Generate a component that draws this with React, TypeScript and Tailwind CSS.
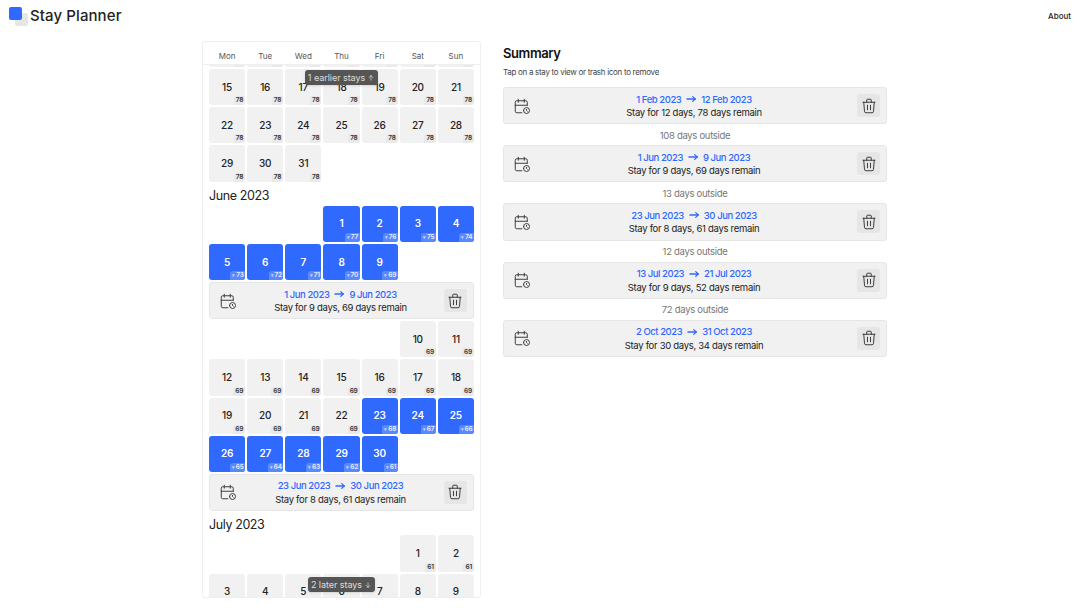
import React from "react";
import { TbCalendarTime, TbTrash, TbArrowNarrowRight, TbArrowUp, TbArrowDown } from "react-icons/tb";

const Weekdays = ["Mon", "Tue", "Wed", "Thu", "Fri", "Sat", "Sun"];

function Day({ d, n, active }: { d: number; n: number; active?: boolean }) {
  if (active) {
    return (
      <div className="relative aspect-square rounded-[3px] bg-[#3069fe] text-white flex items-center justify-center text-[10px] tracking-[-0.2px] font-semibold">
        {d}
        <span className="absolute right-0 bottom-0 rounded-tl-[3px] rounded-br-[3px] bg-[#5a88fe] pl-[2px] pr-[1.5px] text-[6.5px] tracking-[-0.2px] leading-[9px] font-semibold text-[#e6edff]">
          <span className="text-[5px] mr-[1px] opacity-70">▾</span>
          {n}
        </span>
      </div>
    );
  }
  return (
    <div className="relative aspect-square rounded-[3px] bg-[#f1f1f1] text-[#222] flex items-center justify-center text-[10px] tracking-[-0.2px] font-medium">
      {d}
      <span className="absolute right-0 bottom-0 rounded-tl-[3px] rounded-br-[3px] bg-[#e9e9e9] px-[2px] text-[6.5px] tracking-[-0.2px] leading-[9px] font-semibold text-[#333]">
        {n}
      </span>
    </div>
  );
}

function Stay({ from, to, line }: { from: string; to: string; line: string }) {
  return (
    <div className="col-span-7 h-[37.2px] rounded-[3px] border border-[#e6e6e6] bg-[#f1f1f1] flex items-center pl-[9px] pr-[6px]">
      <TbCalendarTime className="w-[18px] h-[18px] shrink-0 text-[#333]" strokeWidth={1.25} />
      <div className="flex-1 flex flex-col items-center justify-center tracking-[-0.3px]">
        <div className="flex items-center gap-[3px] text-[9.5px] leading-[13px] font-medium text-[#3069fe] tracking-[-0.45px]">
          <span>{from}</span>
          <TbArrowNarrowRight className="w-[14px] h-[14px]" strokeWidth={2.2} />
          <span>{to}</span>
        </div>
        <div className="text-[9.5px] leading-[13px] text-[#222]">{line}</div>
      </div>
      <div className="w-[23px] h-[23px] rounded-[3px] bg-[#e6e6e6] flex items-center justify-center shrink-0">
        <TbTrash className="w-[18px] h-[18px] text-[#333]" strokeWidth={1.25} />
      </div>
    </div>
  );
}

function Month({ children }: { children: React.ReactNode }) {
  return <div className="h-[24.3px] pt-[5px] flex items-center text-[12.5px] tracking-[-0.4px] text-[#222]">{children}</div>;
}

function Grid({ children }: { children: React.ReactNode }) {
  return <div className="grid grid-cols-7 gap-[2px]">{children}</div>;
}

function Pill({ children }: { children: React.ReactNode }) {
  return (
    <div className="h-[15px] whitespace-nowrap rounded-[3px] bg-[#555555] px-[3px] flex items-center gap-[2px] text-[9px] tracking-[-0.05px] text-[#dedede] shadow-sm">
      {children}
    </div>
  );
}

function days(from: number, to: number, n: number) {
  const out = [];
  for (let d = from; d <= to; d++) out.push(<Day key={d} d={d} n={n} />);
  return out;
}

function active(from: number, to: number, startN: number) {
  const out = [];
  for (let d = from; d <= to; d++) out.push(<Day key={d} d={d} n={startN - (d - from)} active />);
  return out;
}

function blanks(c: number) {
  const out = [];
  for (let i = 0; i < c; i++) out.push(<div key={"b" + i} />);
  return out;
}

const stays = [
  { from: "1 Feb 2023", to: "12 Feb 2023", line: "Stay for 12 days, 78 days remain", gap: "108 days outside" },
  { from: "1 Jun 2023", to: "9 Jun 2023", line: "Stay for 9 days, 69 days remain", gap: "13 days outside" },
  { from: "23 Jun 2023", to: "30 Jun 2023", line: "Stay for 8 days, 61 days remain", gap: "12 days outside" },
  { from: "13 Jul 2023", to: "21 Jul 2023", line: "Stay for 9 days, 52 days remain", gap: "72 days outside" },
  { from: "2 Oct 2023", to: "31 Oct 2023", line: "Stay for 30 days, 34 days remain", gap: "" },
];

export default function App() {
  return (
    <div className="w-[1080px] h-[608px] overflow-hidden bg-white text-[#222] antialiased" style={{ fontFamily: "Inter, sans-serif" }}>
      <header className="h-[32px] pl-[9px] pr-[9px] flex items-center justify-between">
        <div className="flex items-center">
          <div className="relative w-[19px] h-[19px] mt-[1px]">
            <div className="absolute left-[6px] top-[6px] w-[13px] h-[13px] rounded-[2px] bg-[#e6e6e6]" />
            <div className="absolute left-0 top-0 w-[13px] h-[13px] rounded-[2px] bg-[#3069fe]" />
          </div>
          <span className="ml-[2px] mt-[1px] text-[15px] tracking-[0.1px] font-medium text-[#222]">Stay Planner</span>
        </div>
        <span className="text-[8px] font-medium">About</span>
      </header>
      <div className="flex pt-[9px] pl-[202px]">
        <section className="relative w-[279px] h-[557px] rounded-[3px] border border-[#efefef] flex flex-col overflow-hidden">
          <div className="h-[23px] shrink-0 border-b border-[#efefef] px-[6px] pt-[6px] grid grid-cols-7 gap-[2px] items-center">
            {Weekdays.map((w) => (
              <div key={w} className="text-center text-[8px] text-[#555]">{w}</div>
            ))}
          </div>
          <div className="flex-1 overflow-hidden px-[6px]">
            <div className="mt-[-34px]">
              <Grid>
                {days(8, 14, 78)}
                {days(15, 21, 78)}
                {days(22, 28, 78)}
                {days(29, 31, 78)}
              </Grid>
              <Month>June 2023</Month>
              <Grid>
                {blanks(3)}
                {active(1, 9, 77)}
                {blanks(2)}
                <Stay from="1 Jun 2023" to="9 Jun 2023" line="Stay for 9 days, 69 days remain" />
                {blanks(5)}
                {days(10, 22, 69)}
                <Day d={23} n={68} active />
                {active(24, 30, 67)}
                {blanks(2)}
                <Stay from="23 Jun 2023" to="30 Jun 2023" line="Stay for 8 days, 61 days remain" />
              </Grid>
              <Month>July 2023</Month>
              <Grid>
                {blanks(5)}
                {days(1, 9, 61)}
              </Grid>
            </div>
          </div>
          <div className="absolute inset-x-0 top-[28px] flex justify-center">
            <Pill>1 earlier stays <TbArrowUp className="w-[8px] h-[8px]" /></Pill>
          </div>
          <div className="absolute inset-x-0 top-[535px] flex justify-center">
            <Pill>2 later stays <TbArrowDown className="w-[8px] h-[8px]" /></Pill>
          </div>
        </section>
        <section className="ml-[22px] w-[384px]">
          <h2 className="mt-[4px] text-[13px] leading-[17px] font-semibold tracking-[-0.4px] text-[#111]">Summary</h2>
          <p className="mt-[5px] text-[8px] leading-[10px] tracking-[-0.3px] text-[#444]">Tap on a stay to view or trash icon to remove</p>
          <div className="mt-[10px] flex flex-col">
            {stays.map((s) => (
              <div key={s.from} className="grid grid-cols-7">
                <Stay from={s.from} to={s.to} line={s.line} />
                {s.gap && <div className="col-span-7 h-[21px] pt-[2px] flex items-center justify-center text-[9.5px] tracking-[-0.3px] text-[#777]">{s.gap}</div>}
              </div>
            ))}
          </div>
        </section>
      </div>
    </div>
  );
}
